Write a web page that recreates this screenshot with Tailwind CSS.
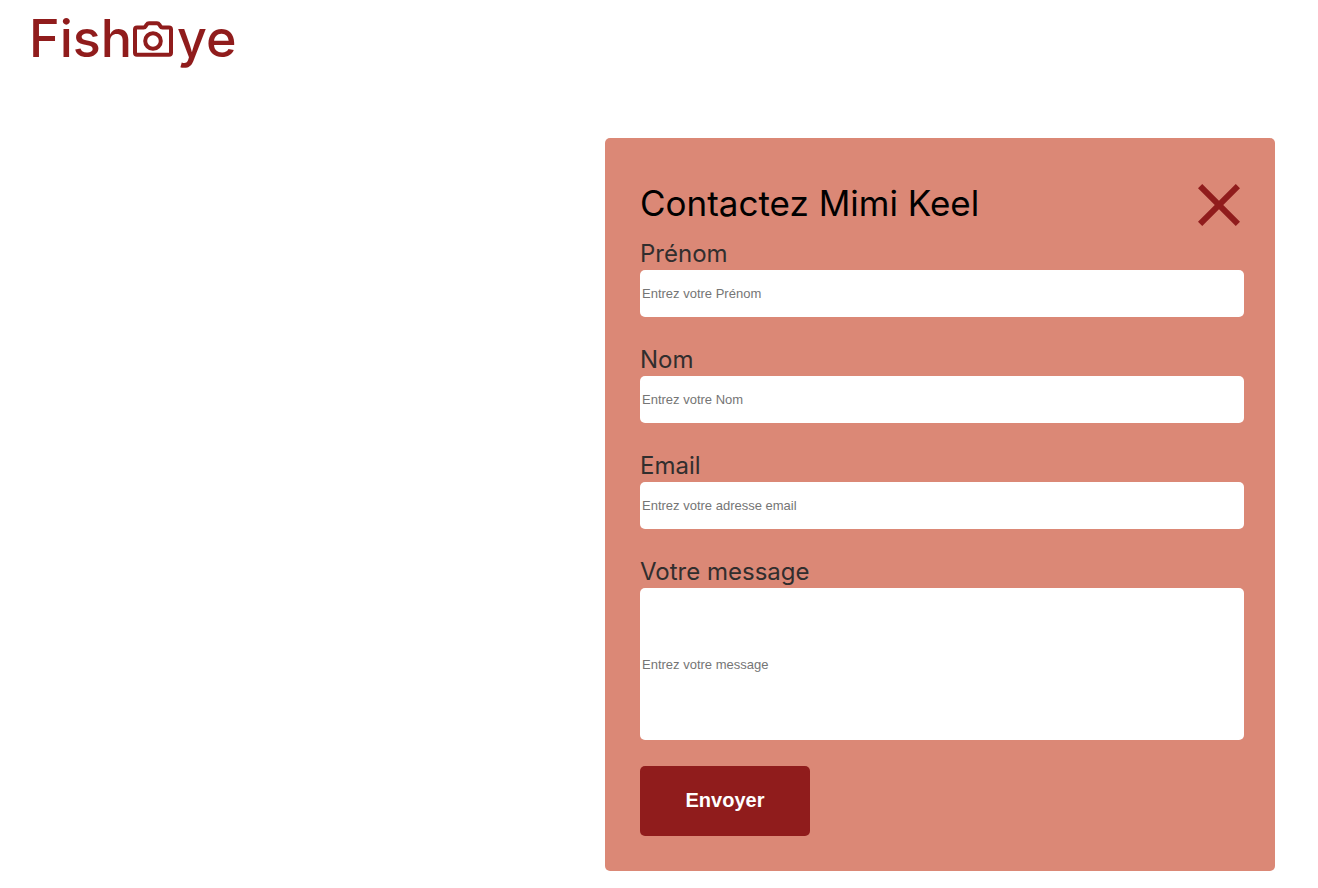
<!DOCTYPE html>
<html lang="fr">
<head>
<meta charset="utf-8">
<meta name="viewport" content="width=device-width, initial-scale=1">
<title>Fisheye - Contact</title>
<script src="https://cdn.jsdelivr.net/npm/@tailwindcss/browser@4"></script>
</head>
<body class="bg-white font-['Inter','Liberation_Sans',sans-serif]">
<header class="px-[29px] pt-[7px]">
  <a href="#" aria-label="Fisheye" class="flex w-fit items-center text-[52px] leading-[64px] font-medium text-[#901c1c]">
    <span>Fish</span>
    <svg class="mr-1 ml-px h-9 w-10" viewBox="0 0 40 36" fill="none" stroke="currentColor" stroke-width="4" stroke-linejoin="round" aria-hidden="true">
      <path d="M4 6.500H10.500Q12 6.500 12.800 5L13.500 3.800Q14.500 2.300 16 2.300H24Q25.500 2.300 26.500 3.800L27.200 5Q28 6.500 29.500 6.500H36Q38 6.500 38 8.500V31.700Q38 33.700 36 33.700H4Q2 33.700 2 31.700V8.500Q2 6.500 4 6.500Z"/>
      <circle cx="20" cy="20" r="7.800"/>
    </svg>
    <span>ye</span>
  </a>
</header>
<main class="flex justify-end pt-[67px] pr-[43px] pb-4 pl-4">
  <section aria-labelledby="title" class="w-full max-w-[670px] rounded-[5px] bg-[#db8876] py-[35px] pr-[31px] pl-[35px]">
    <div class="flex h-[65px] items-center justify-between pr-1 pb-[2px]">
      <h1 id="title" class="pb-1 text-[35px] leading-10 font-normal text-black">Contactez Mimi Keel</h1>
      <button type="button" aria-label="Fermer" class="text-[#901c1c]">
        <svg class="size-[42px]" viewBox="0 0 42 42" fill="currentColor" aria-hidden="true">
          <path d="M42 4.230 37.770 0 21 16.770 4.230 0 0 4.230 16.770 21 0 37.770 4.230 42 21 25.230 37.770 42 42 37.770 25.230 21Z"/>
        </svg>
      </button>
    </div>
    <form class="flex flex-col items-start">
      <label for="prenom" class="text-2xl font-normal text-[#312e2e]">Prénom</label>
      <input id="prenom" type="text" placeholder="Entrez votre Prénom" class="mb-[27px] h-[47px] w-full rounded-[5px] bg-white px-[2px] font-['Liberation_Sans',sans-serif] text-[13px] placeholder:text-[#757575]">
      <label for="nom" class="text-2xl font-normal text-[#312e2e]">Nom</label>
      <input id="nom" type="text" placeholder="Entrez votre Nom" class="mb-[27px] h-[47px] w-full rounded-[5px] bg-white px-[2px] font-['Liberation_Sans',sans-serif] text-[13px] placeholder:text-[#757575]">
      <label for="email" class="text-2xl font-normal text-[#312e2e]">Email</label>
      <input id="email" type="email" placeholder="Entrez votre adresse email" class="mb-[27px] h-[47px] w-full rounded-[5px] bg-white px-[2px] font-['Liberation_Sans',sans-serif] text-[13px] placeholder:text-[#757575]">
      <label for="message" class="text-2xl font-normal text-[#312e2e]">Votre message</label>
      <input id="message" type="text" placeholder="Entrez votre message" class="mb-[26px] h-[152px] w-full rounded-[5px] bg-white px-[2px] font-['Liberation_Sans',sans-serif] text-[13px] placeholder:text-[#757575]">
      <button type="submit" class="h-[70px] w-[170px] rounded-[5px] bg-[#901c1c] pb-[2px] font-['Liberation_Sans',sans-serif] text-xl font-bold text-white">Envoyer</button>
    </form>
  </section>
</main>
</body>
</html>
